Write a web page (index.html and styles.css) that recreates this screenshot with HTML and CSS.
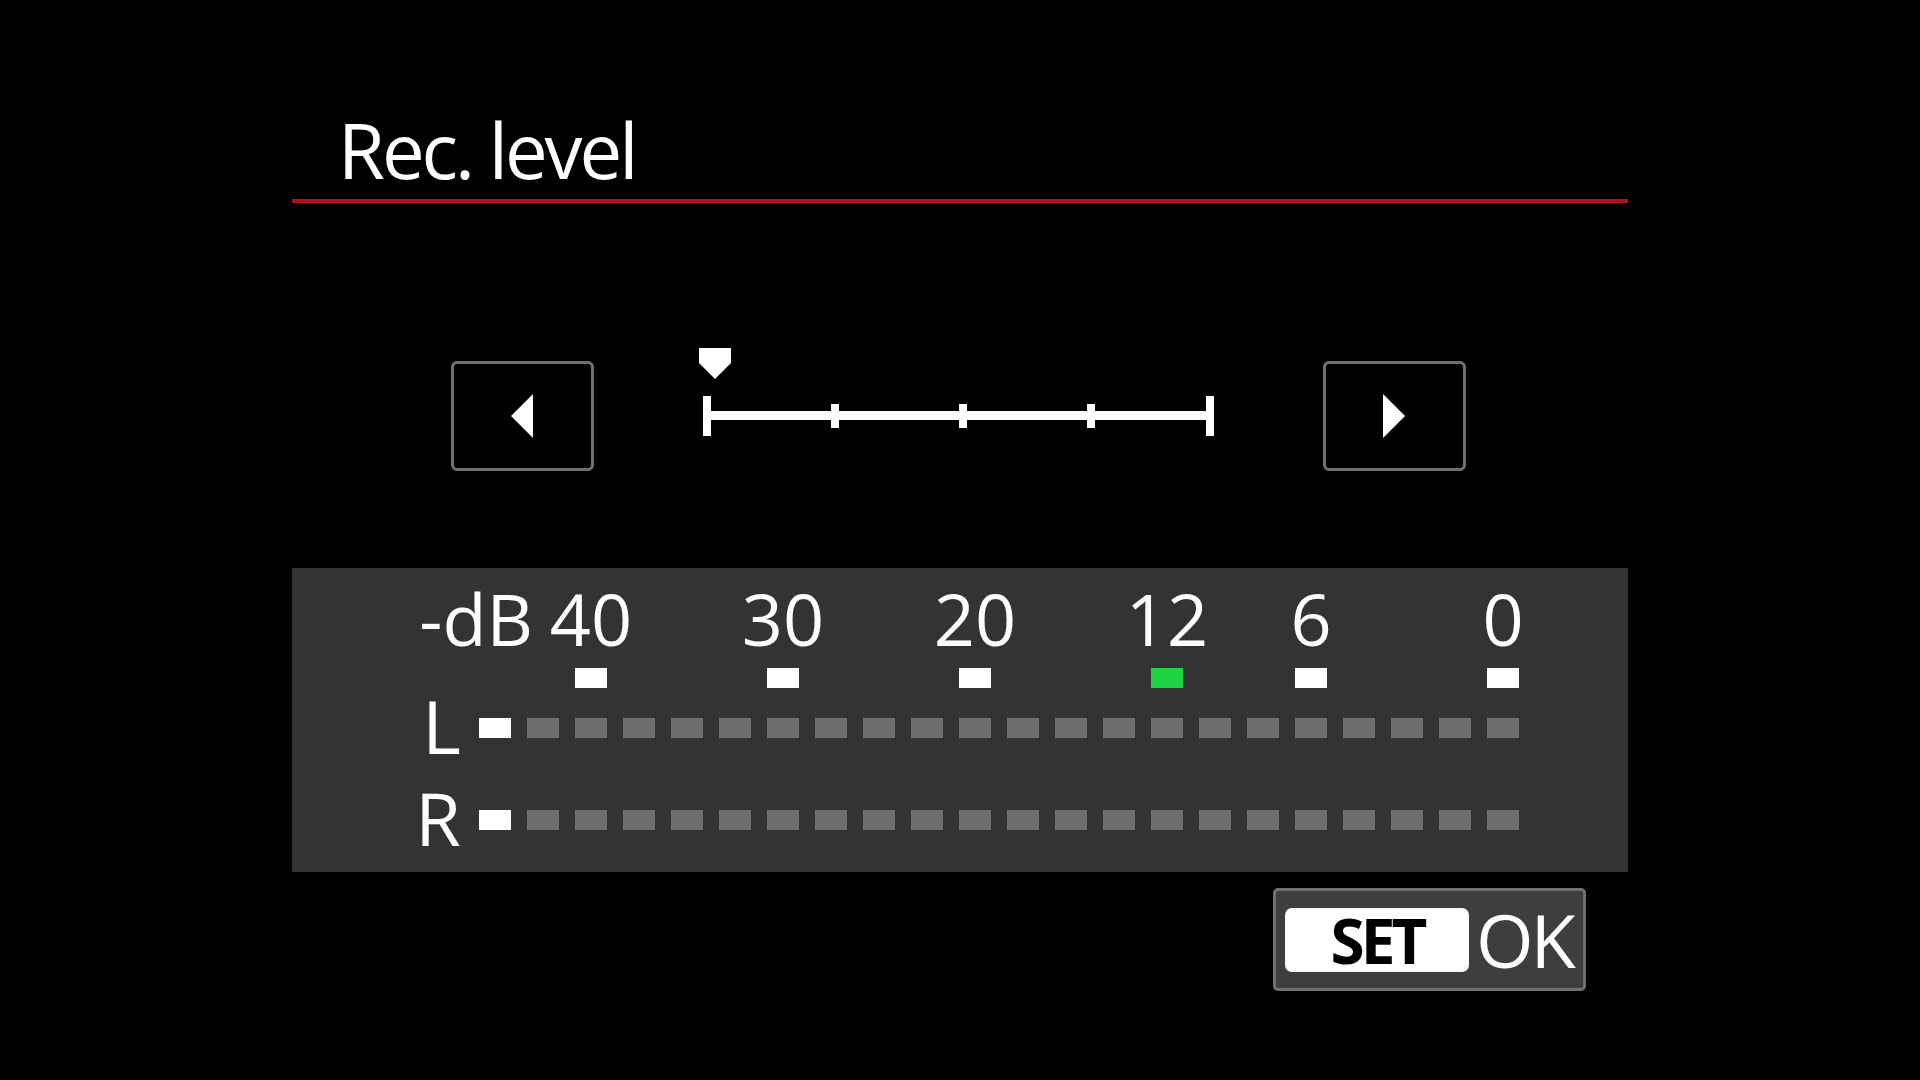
FILE: index.html
```html
<!DOCTYPE html>
<html lang="en">
<head>
    <meta charset="UTF-8">
    <meta name="viewport" content="width=device-width, initial-scale=1.0">
    <title>Rec. level</title>
    <link rel="stylesheet" href="styles.css">
</head>
<body>
    <div class="screen">
        <h1 class="title">Rec. level</h1>

        <!-- level slider with step buttons -->
        <div class="control">
            <div class="step-btn">
                <svg width="22" height="44" viewBox="0 0 22 44"><polygon points="22,0 22,44 0,22" fill="#fff"/></svg>
            </div>
            <div class="slider">
                <svg width="511" height="110" viewBox="0 0 511 110">
                    <polygon points="-4,-13 28,-13 28,2 12,18 -4,2" fill="#fff"/>
                    <rect x="0" y="50" width="511" height="9" fill="#fff"/>
                    <rect x="0" y="35" width="8" height="40" fill="#fff"/>
                    <rect x="503" y="35" width="8" height="40" fill="#fff"/>
                    <rect x="128" y="43" width="8" height="24" fill="#fff"/>
                    <rect x="256" y="43" width="8" height="24" fill="#fff"/>
                    <rect x="384" y="43" width="8" height="24" fill="#fff"/>
                </svg>
            </div>
            <div class="step-btn">
                <svg width="22" height="44" viewBox="0 0 22 44"><polygon points="0,0 22,22 0,44" fill="#fff"/></svg>
            </div>
        </div>

        <!-- level meter -->
        <div class="meter">
            <div class="meter-row scale">
                <span class="unit">-dB</span>
                <span class="num c40">40</span>
                <span class="num c30">30</span>
                <span class="num c20">20</span>
                <span class="num c12">12</span>
                <span class="num c6">6</span>
                <span class="num c0">0</span>
            </div>
            <div class="meter-row marks">
                <span class="c40"></span>
                <span class="c30"></span>
                <span class="c20"></span>
                <span class="c12 peak"></span>
                <span class="c6"></span>
                <span class="c0"></span>
            </div>
            <div class="meter-row channel ch-left">
                <span class="ch">L</span>
                <span class="led on"></span>
                <span class="led"></span><span class="led"></span><span class="led"></span><span class="led"></span>
                <span class="led"></span><span class="led"></span><span class="led"></span><span class="led"></span>
                <span class="led"></span><span class="led"></span><span class="led"></span><span class="led"></span>
                <span class="led"></span><span class="led"></span><span class="led"></span><span class="led"></span>
                <span class="led"></span><span class="led"></span><span class="led"></span><span class="led"></span>
                <span class="led"></span>
            </div>
            <div class="meter-row channel ch-right">
                <span class="ch">R</span>
                <span class="led on"></span>
                <span class="led"></span><span class="led"></span><span class="led"></span><span class="led"></span>
                <span class="led"></span><span class="led"></span><span class="led"></span><span class="led"></span>
                <span class="led"></span><span class="led"></span><span class="led"></span><span class="led"></span>
                <span class="led"></span><span class="led"></span><span class="led"></span><span class="led"></span>
                <span class="led"></span><span class="led"></span><span class="led"></span><span class="led"></span>
                <span class="led"></span>
            </div>
        </div>

        <div class="actions">
            <div class="ok-btn">
                <span class="set-key">SET</span>
                <span class="ok-label">OK</span>
            </div>
        </div>
    </div>
</body>
</html>
```

FILE: styles.css
```css
/* Rec. level screen */
body {
    margin: 0;
    background: #000;
    color: #fff;
    font-family: "Open Sans", "Noto Sans", sans-serif;
}

.screen {
    width: 1336px;
    margin: 0 auto;
    padding-top: 112px;
}

.title {
    margin: 0;
    padding: 0 0 11px 46px;
    font-size: 76px;
    font-weight: normal;
    line-height: 76px;
    letter-spacing: -3px;
    border-bottom: 4px solid #b3101d;
}

/* slider row */
.control {
    display: flex;
    justify-content: center;
    align-items: center;
    gap: 109px;
    height: 110px;
    margin-top: 158px;
    padding-right: 4px;
}

.step-btn {
    width: 143px;
    height: 110px;
    box-sizing: border-box;
    border: 3px solid #707070;
    border-radius: 6px;
    display: flex;
    align-items: center;
    justify-content: center;
}

.slider {
    width: 511px;
    height: 110px;
}

.slider svg {
    display: block;
    overflow: visible;
}

/* meter panel */
.meter {
    height: 304px;
    box-sizing: border-box;
    margin-top: 97px;
    padding: 14px 0 22px 111px;
    background: #333;
}

.meter-row {
    display: grid;
    grid-template-columns: 60px repeat(22, 32px);
    column-gap: 16px;
}

.scale {
    height: 72px;
    font-size: 72px;
    line-height: 72px;
}

.scale .num {
    display: flex;
    justify-content: center;
}

.scale .unit {
    grid-column: 1 / 4;
    justify-self: end;
    margin-right: 26px;
}

.c40 { grid-column: 4; }
.c30 { grid-column: 8; }
.c20 { grid-column: 12; }
.c12 { grid-column: 16; }
.c6  { grid-column: 19; }
.c0  { grid-column: 23; }

.marks {
    height: 20px;
    margin-top: 14px;
}

.marks span {
    background: #fff;
}

.marks .peak {
    background: #1fd443;
}

.channel {
    height: 60px;
    align-items: center;
}

.ch-left {
    margin-top: 10px;
}

.ch-right {
    margin-top: 32px;
}

.ch {
    font-size: 74px;
    line-height: 56px;
    padding-bottom: 4px;
    padding-right: 2px;
    text-align: right;
}

.led {
    height: 20px;
    background: #6e6e6e;
}

.led.on {
    background: #fff;
}

/* SET OK */
.actions {
    display: flex;
    justify-content: flex-end;
    margin-top: 16px;
    padding-right: 42px;
}

.ok-btn {
    display: flex;
    align-items: center;
    width: 313px;
    height: 103px;
    box-sizing: border-box;
    padding-left: 9px;
    border: 3px solid #707070;
    border-radius: 5px;
    background: #3e3e3e;
}

.set-key {
    display: flex;
    align-items: center;
    justify-content: center;
    width: 184px;
    height: 64px;
    border-radius: 7px;
    background: #fff;
    color: #000;
    font-size: 62px;
    font-weight: bold;
    line-height: 1;
    letter-spacing: -4px;
}

.ok-label {
    margin-left: 7px;
    font-size: 74px;
    line-height: 1;
    letter-spacing: -3px;
}
```
